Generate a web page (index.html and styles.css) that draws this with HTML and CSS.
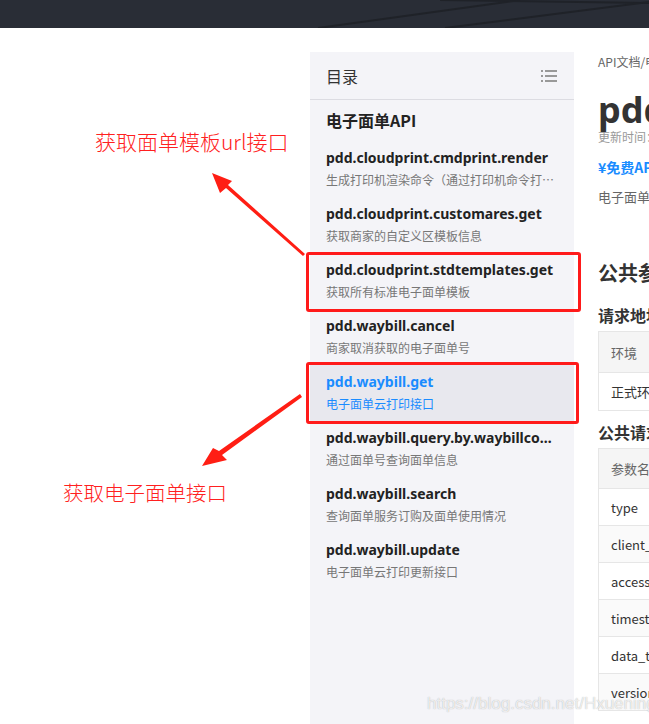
FILE: index.html
```html
<!DOCTYPE html>
<html lang="zh">
<head>
<meta charset="utf-8">
<title>pdd.waybill.get</title>
<link rel="stylesheet" href="styles.css">
</head>
<body>
<header class="topbar">
  <svg class="topbar-lines" width="649" height="28" viewBox="0 0 649 28">
    <path d="M318 28 L520 0" stroke="#1f2228" stroke-width="2" fill="none"/>
    <path d="M440 0 L649 3" stroke="#1f2228" stroke-width="2" fill="none"/>
    <path d="M445 28 L649 2" stroke="#1f2228" stroke-width="2" fill="none"/>
  </svg>
</header>
<div class="page">
  <div class="gutter"></div>
  <aside class="toc">
    <div class="toc-head">
      <span>目录</span>
      <svg class="toc-icon" width="16" height="12" viewBox="0 0 16 12">
        <rect x="0" y="0" width="2" height="2" fill="#999"/>
        <rect x="4" y="0" width="12" height="2" fill="#999"/>
        <rect x="0" y="5" width="2" height="2" fill="#999"/>
        <rect x="4" y="5" width="12" height="2" fill="#999"/>
        <rect x="0" y="10" width="2" height="2" fill="#999"/>
        <rect x="4" y="10" width="12" height="2" fill="#999"/>
      </svg>
    </div>
    <div class="toc-section">电子面单API</div>
    <ul class="toc-list">
      <li class="toc-item"><div class="t">pdd.cloudprint.cmdprint.render</div><div class="d">生成打印机渲染命令（通过打印机命令打…</div></li>
      <li class="toc-item"><div class="t">pdd.cloudprint.customares.get</div><div class="d">获取商家的自定义区模板信息</div></li>
      <li class="toc-item marked mark-a"><div class="t">pdd.cloudprint.stdtemplates.get</div><div class="d">获取所有标准电子面单模板</div></li>
      <li class="toc-item"><div class="t">pdd.waybill.cancel</div><div class="d">商家取消获取的电子面单号</div></li>
      <li class="toc-item active marked mark-b"><div class="t">pdd.waybill.get</div><div class="d">电子面单云打印接口</div></li>
      <li class="toc-item"><div class="t">pdd.waybill.query.by.waybillco…</div><div class="d">通过面单号查询面单信息</div></li>
      <li class="toc-item"><div class="t">pdd.waybill.search</div><div class="d">查询面单服务订购及面单使用情况</div></li>
      <li class="toc-item"><div class="t">pdd.waybill.update</div><div class="d">电子面单云打印更新接口</div></li>
    </ul>
  </aside>
  <main class="doc">
    <div class="crumb">API文档/电子面单API/pdd.waybill.get</div>
    <h1 class="title">pdd.waybill.get</h1>
    <div class="updated">更新时间：2019-06-20 10:30:00</div>
    <div class="price">¥免费API</div>
    <div class="desc">电子面单云打印接口</div>
    <h2 class="h2">公共参数</h2>
    <h3 class="h3">请求地址</h3>
    <table class="tbl tbl-a">
      <tr class="th"><td>环境</td><td>服务地址(HTTP/HTTPS)</td></tr>
      <tr><td>正式环境</td><td>https://gw-api.pinduoduo.com/api/router</td></tr>
    </table>
    <h3 class="h3 h3b">公共请求参数</h3>
    <table class="tbl tbl-b">
      <tr class="th"><td>参数名称</td><td>参数类型</td><td>是否必填</td><td>说明</td></tr>
      <tr><td>type</td><td>STRING</td><td>必填</td><td>API接口名称</td></tr>
      <tr class="alt"><td>client_id</td><td>STRING</td><td>必填</td><td>POP分配给应用的client_id</td></tr>
      <tr><td>access_token</td><td>STRING</td><td>非必填</td><td>通过code获取的access_token</td></tr>
      <tr class="alt"><td>timestamp</td><td>STRING</td><td>必填</td><td>时间戳</td></tr>
      <tr><td>data_type</td><td>STRING</td><td>非必填</td><td>响应格式</td></tr>
      <tr class="alt"><td>version</td><td>STRING</td><td>非必填</td><td>API协议版本号</td></tr>
    </table>
  </main>
</div>
<svg class="arrows" width="649" height="724" viewBox="0 0 649 724">
  <polygon fill="#ff1e14" points="305,254 303,256 226,188 220,193 212,173 232,181 228,185"/>
  <polygon fill="#ff1e14" points="300,394 302,397 222,455 227,460 202,466 213,448 219,451"/>
</svg>
<div class="note note-a">获取面单模板url接口</div>
<div class="note note-b">获取电子面单接口</div>
<div class="watermark">https://blog.csdn.net/Hxuening</div>
</body>
</html>
```
FILE: styles.css
```css
* { box-sizing: border-box; }
html, body { margin: 0; padding: 0; }
body {
  width: 649px;
  height: 724px;
  overflow: hidden;
  position: relative;
  background: #fff;
  font-family: "Noto Sans", "Noto Sans CJK SC", sans-serif;
  color: #333;
}
.topbar {
  height: 28px;
  background: #292d36;
  display: flex;
}
.topbar-lines { display: block; }
.page {
  display: flex;
  margin-top: 24px;
  height: 672px;
  overflow: hidden;
}
.gutter { width: 310px; flex-shrink: 0; }
.toc {
  width: 264px;
  flex-shrink: 0;
  background: #f4f4f8;
  height: 100%;
}
.toc-head {
  height: 48px;
  border-bottom: 1px solid #dcdce2;
  display: flex;
  align-items: center;
  justify-content: space-between;
  padding: 0 17px 0 16px;
  font-size: 16px;
  color: #333;
  font-family: "Noto Sans CJK SC", sans-serif;
}
.toc-icon { display: block; }
.toc-section {
  font-size: 16px;
  font-weight: bold;
  line-height: 22px;
  padding: 9px 16px 10px;
  font-family: "Noto Sans CJK SC", sans-serif;
  color: #222;
}
.toc-list { list-style: none; margin: 0; padding: 0; }
.toc-item {
  height: 56px;
  padding: 7px 16px 0;
  position: relative;
}
.toc-item .t {
  font-size: 14px;
  font-weight: bold;
  line-height: 20px;
  color: #222;
  white-space: nowrap;
  font-family: "Noto Sans", "Noto Sans CJK SC", sans-serif;
}
.toc-item .d {
  font-size: 12px;
  line-height: 24px;
  color: #777;
  white-space: nowrap;
  font-family: "Noto Sans CJK SC", sans-serif;
}
.toc-item.active { background: #e8e8ee; }
.toc-item.active .t, .toc-item.active .d { color: #1a8cff; }
.marked::after {
  content: "";
  position: absolute;
  border: 3px solid #ff1a1a;
  border-radius: 3px;
}
.mark-a::after { left: -4px; right: -7px; top: -1px; bottom: -3px; }
.mark-b::after { left: -4px; right: -5px; top: -3px; bottom: -3px; }

.doc {
  width: 640px;
  flex-shrink: 0;
  margin-left: 24px;
  font-family: "Noto Sans CJK SC", sans-serif;
}
.crumb { font-size: 12px; line-height: 20px; color: #666; white-space: nowrap; }
.title {
  margin: 20px 0 0;
  font-size: 36px;
  line-height: 36px;
  font-weight: bold;
  color: #333;
  font-family: "Noto Sans", sans-serif;
}
.updated { font-size: 12px; line-height: 18px; color: #999; }
.price { margin-top: 11px; font-size: 14px; line-height: 20px; font-weight: bold; color: #1a8cff; }
.desc { margin-top: 10px; font-size: 13px; line-height: 20px; color: #666; }
.h2 { margin: 52px 0 0; font-size: 20px; line-height: 28px; font-weight: bold; color: #333; }
.h3 { margin: 16px 0 0; font-size: 16px; line-height: 24px; font-weight: bold; color: #333; }
.h3b { margin-top: 9px; }
.tbl {
  border-collapse: collapse;
  margin-top: 4px;
  font-size: 13px;
  white-space: nowrap;
}
.tbl-b { margin-top: 4px; }
.tbl td {
  border: 1px solid #e6e6e6;
  padding: 0 12px;
  color: #333;
  width: 150px;
}
.tbl .th td { background: #f5f5f5; color: #666; height: 41px; }
.tbl-a tr:not(.th) td { height: 38px; }
.tbl-b .th td { height: 40px; }
.tbl-b tr:not(.th) td { height: 37px; }
.tbl-b tr.alt td { background: #fafafa; }

.arrows { position: absolute; left: 0; top: 0; pointer-events: none; }
.note {
  position: absolute;
  color: #ff2020;
  font-family: "Noto Sans CJK SC", sans-serif;
  font-weight: 300;
  font-size: 20px;
  line-height: 26px;
  white-space: nowrap;
}
.note-a { left: 95px; top: 128px; font-size: 21px; }
.note-b { left: 63px; top: 479px; font-size: 20.5px; }
.watermark {
  position: absolute;
  left: 427px;
  top: 693px;
  font-family: "Liberation Sans", Arial, sans-serif;
  font-size: 17px;
  line-height: 22px;
  color: rgba(255,255,255,0.75);
  text-shadow: 0 0 1px rgba(120,120,120,0.6);
  white-space: nowrap;
}
```
